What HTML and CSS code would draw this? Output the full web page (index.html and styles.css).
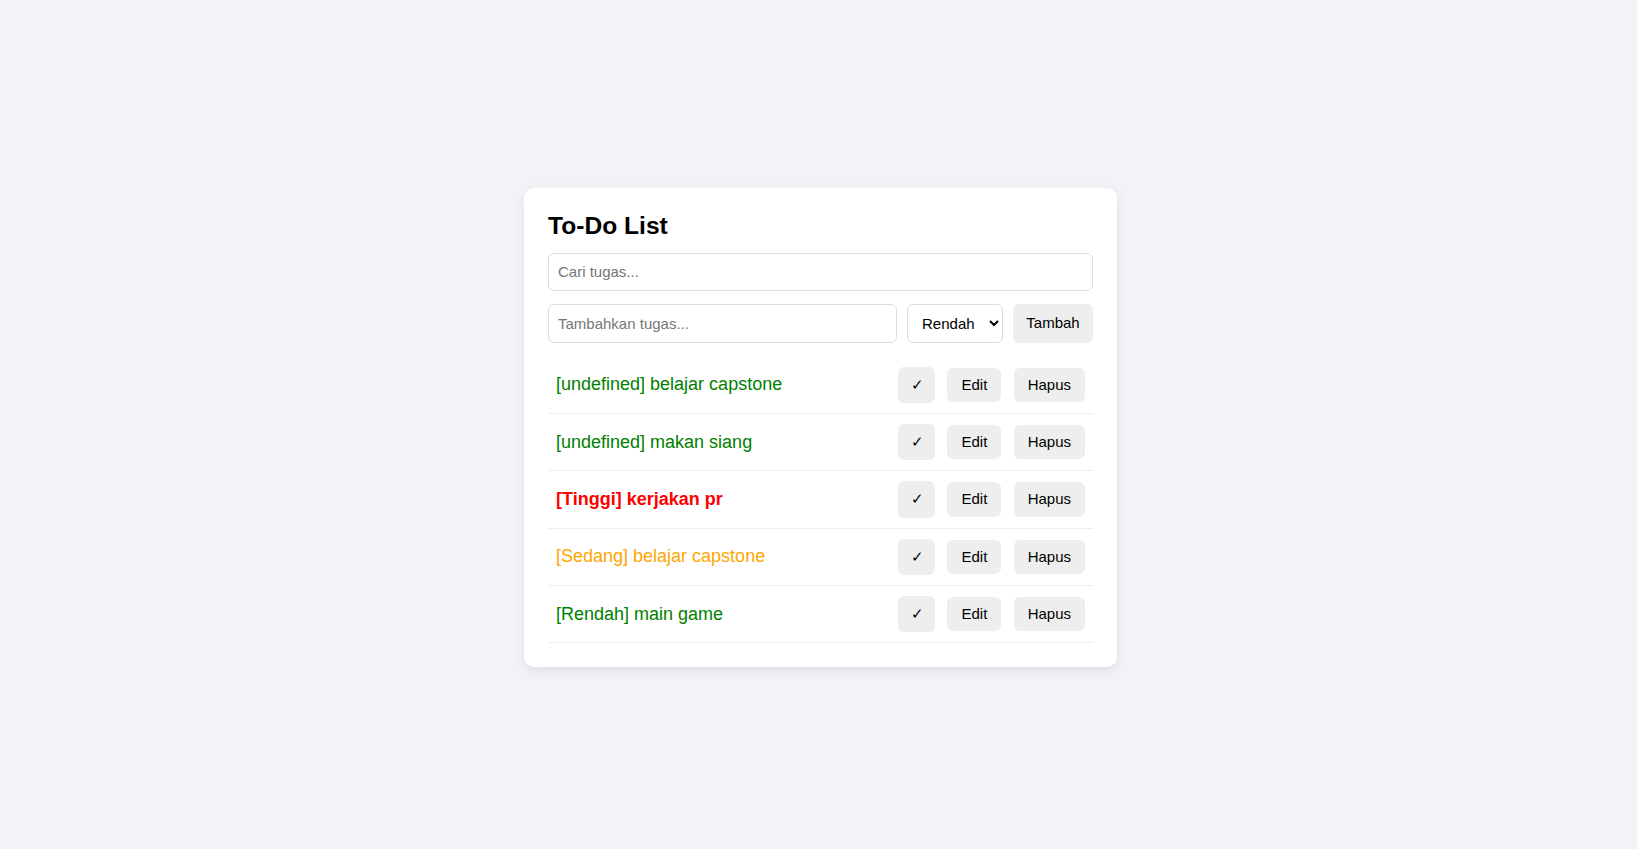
FILE: index.html
```html
<!DOCTYPE html>
<html lang="id">
<head>
<meta charset="utf-8">
<title>To-Do List</title>
<link rel="stylesheet" href="styles.css">
</head>
<body>
<div class="page">
  <div class="card">
    <h2 class="title">To-Do List</h2>
    <input class="field search" type="text" placeholder="Cari tugas...">
    <div class="add-row">
      <input class="field add-input" type="text" placeholder="Tambahkan tugas...">
      <select class="priority">
        <option>Rendah</option>
        <option>Sedang</option>
        <option>Tinggi</option>
      </select>
      <button class="btn btn-add">Tambah</button>
    </div>
    <ul class="list">
      <li class="item">
        <span class="task low">[undefined] belajar capstone</span>
        <div class="actions">
          <button class="btn btn-check">✓</button>
          <button class="btn">Edit</button>
          <button class="btn">Hapus</button>
        </div>
      </li>
      <li class="item">
        <span class="task low">[undefined] makan siang</span>
        <div class="actions">
          <button class="btn btn-check">✓</button>
          <button class="btn">Edit</button>
          <button class="btn">Hapus</button>
        </div>
      </li>
      <li class="item">
        <span class="task high">[Tinggi] kerjakan pr</span>
        <div class="actions">
          <button class="btn btn-check">✓</button>
          <button class="btn">Edit</button>
          <button class="btn">Hapus</button>
        </div>
      </li>
      <li class="item">
        <span class="task mid">[Sedang] belajar capstone</span>
        <div class="actions">
          <button class="btn btn-check">✓</button>
          <button class="btn">Edit</button>
          <button class="btn">Hapus</button>
        </div>
      </li>
      <li class="item">
        <span class="task low">[Rendah] main game</span>
        <div class="actions">
          <button class="btn btn-check">✓</button>
          <button class="btn">Edit</button>
          <button class="btn">Hapus</button>
        </div>
      </li>
    </ul>
  </div>
</div>
</body>
</html>
```

FILE: styles.css
```css
html, body {
  margin: 0;
  padding: 0;
}

body {
  background: #f3f3f7;
  font-family: "Liberation Sans", Arial, sans-serif;
  color: #000;
}

.page {
  box-sizing: border-box;
  min-height: 100vh;
  display: flex;
  justify-content: center;
  align-items: center;
  padding: 6px 0 0 4px;
}

.card {
  box-sizing: border-box;
  width: 593px;
  background: #fff;
  border-radius: 10px;
  padding: 24px;
  box-shadow: 0 4px 12px rgba(0, 0, 0, 0.08);
}

.title {
  margin: 0 0 14px;
  font-size: 24.6px;
  line-height: 27.6px;
  font-weight: bold;
}

.field {
  box-sizing: border-box;
  font-family: "Liberation Sans", Arial, sans-serif;
  font-size: 15px;
  padding: 9px 9px;
  border: 1px solid #dcdcdc;
  border-radius: 6px;
  outline: none;
  background: #fff;
}

.field::placeholder {
  color: #767676;
}

.search {
  display: block;
  width: 100%;
  height: 37.4px;
  margin-bottom: 13.6px;
}

.add-row {
  display: flex;
  gap: 9.6px;
  height: 38.4px;
  margin-bottom: 14.2px;
}

.add-input {
  flex: 1;
  min-width: 0;
}

.priority {
  box-sizing: border-box;
  width: 96.4px;
  font-family: "Liberation Sans", Arial, sans-serif;
  font-size: 15px;
  color: #000;
  padding: 0 4px 0 10px;
  border: 1px solid #dcdcdc;
  border-radius: 6px;
  background: #fff;
}

.btn {
  font-family: "Liberation Sans", Arial, sans-serif;
  font-size: 15px;
  color: #000;
  background: #eeeeee;
  border: none;
  border-radius: 6px;
  padding: 8px 14px;
  line-height: 18.3px;
  cursor: pointer;
}

.btn-add {
  width: 80px;
  padding: 0 12px;
}

.btn-check {
  line-height: 20.3px;
  padding: 8px 13px;
  width: 37.7px;
  font-weight: 300;
}

.list {
  list-style: none;
  margin: 0;
  padding: 0;
}

.item {
  display: flex;
  align-items: center;
  justify-content: space-between;
  padding: 10px 8px;
  border-bottom: 1px solid #eeeeee;
}

.task {
  font-size: 18px;
}

.task.low {
  color: green;
}

.task.mid {
  color: orange;
}

.task.high {
  color: red;
  font-weight: bold;
}

.actions {
  display: flex;
  align-items: center;
  gap: 12.3px;
}
```
